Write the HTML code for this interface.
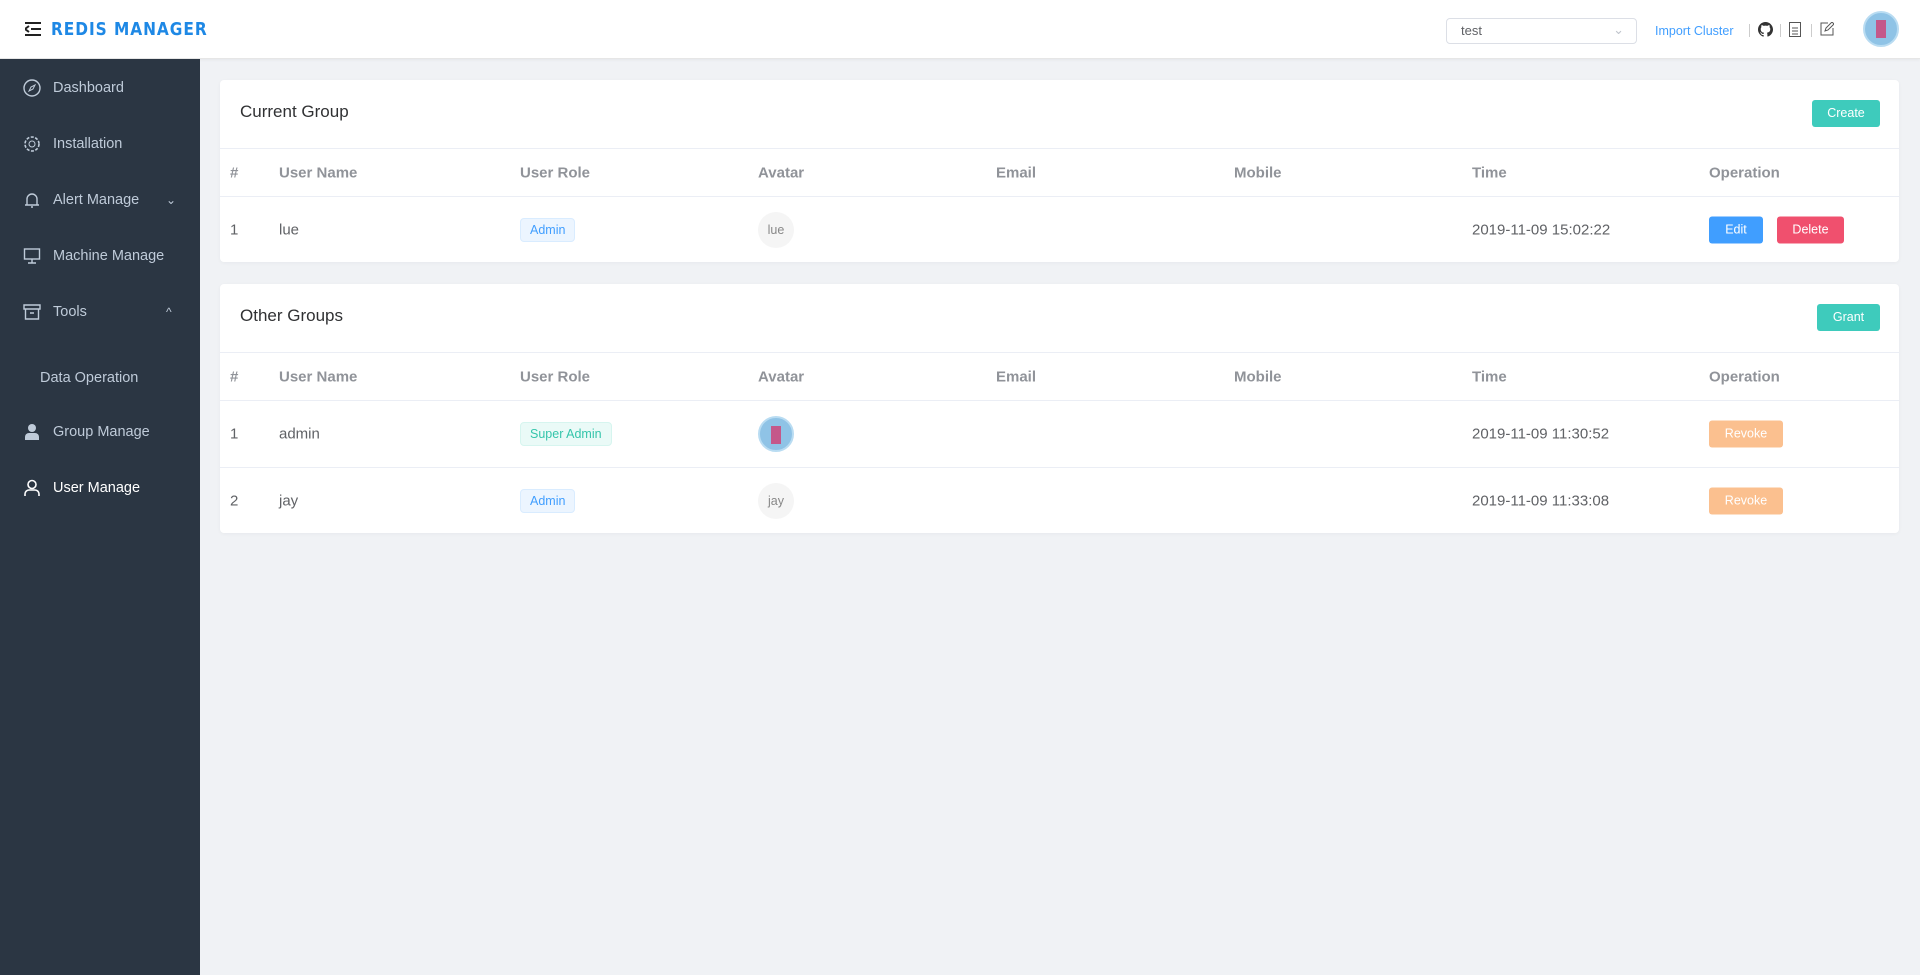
<!DOCTYPE html>
<html><head><meta charset="utf-8"><style>
*{box-sizing:border-box;margin:0;padding:0}
body{width:1920px;height:975px;overflow:hidden;background:#f0f2f5;font-family:"Liberation Sans",sans-serif;position:relative;color:#606266}
.hdr{position:absolute;left:0;top:0;width:1920px;height:59px;background:#fff;border-bottom:1px solid #e6e6e6;box-shadow:0 1px 3px rgba(0,0,0,.05)}
.side{position:absolute;left:0;top:59px;width:200px;height:916px;background:#2b3643}
.mi{position:absolute;left:0;width:200px;height:56px;line-height:56px;color:#bfcbd9;font-size:14.5px;padding-left:53px}
.mi svg{position:absolute;left:23px;top:19px}
.card{position:absolute;left:220px;width:1679px;background:#fff;border-radius:4px;box-shadow:0 1px 4px rgba(0,0,0,.04)}
.ct{position:absolute;left:20px;font-size:17px;color:#303133}
.btn{position:absolute;color:#fff;font-size:12.5px;text-align:center;border-radius:3px}
.row{position:absolute;left:0;width:1679px;border-top:1px solid #ebeef5;font-size:15px}
.row span{position:absolute;top:50%;transform:translateY(-50%);white-space:nowrap}
.th span{font-weight:bold;color:#909399}
.tag{font-size:12.5px;padding:4px 9px;border-radius:4px;border:1px solid}
.tb{color:#409eff;background:#ecf5ff;border-color:#d9ecff}
.tg{color:#35c5ab;background:#eafaf7;border-color:#d6f5ef}
.av{width:36px;height:36px;border-radius:50%;background:#f5f5f5;color:#888;font-size:12.5px;text-align:center;line-height:36px}
</style></head><body>
<div class="hdr">
<svg style="position:absolute;left:25px;top:22px" width="16" height="14" viewBox="0 0 16 14"><path d="M0 1h16M6 7h10M0 13h16M4 4L0 7l4 3" stroke="#222" stroke-width="2" fill="none"/></svg>
<div style="position:absolute;left:51px;top:19px;font-size:18px;font-weight:bold;letter-spacing:1px;color:#1e88e5;font-family:'DejaVu Sans Condensed','Liberation Sans Narrow',sans-serif;transform:scaleX(0.95);transform-origin:left">REDIS MANAGER</div>
<div style="position:absolute;left:1446px;top:18px;width:191px;height:26px;border:1px solid #dcdfe6;border-radius:4px;font-size:13px;color:#606266;line-height:24px;padding-left:14px">test<span style="position:absolute;right:12px;top:-1px;color:#c0c4cc">⌄</span></div>
<div style="position:absolute;left:1655px;top:24px;font-size:12.5px;color:#409eff">Import Cluster</div>
<div style="position:absolute;left:1749px;top:24px;width:1px;height:13px;background:#ccc"></div>
<svg style="position:absolute;left:1758px;top:22px" width="15" height="15" viewBox="0 0 16 16"><path fill="#333" d="M8 0C3.6 0 0 3.6 0 8c0 3.5 2.3 6.5 5.5 7.6.4.1.5-.2.5-.4v-1.4c-2.2.5-2.7-1-2.7-1-.4-.9-.9-1.200-.9-1.200-.7-.5.1-.5.1-.5.8.1 1.2.8 1.2.8.7 1.2 1.900.9 2.300.7.1-.5.3-.9.5-1.1-1.8-.2-3.6-.9-3.6-4 0-.9.3-1.6.8-2.1-.1-.2-.4-1 .1-2.1 0 0 .7-.2 2.2.8.6-.2 1.3-.3 2-.3s1.4.1 2 .3c1.5-1 2.2-.8 2.2-.8.4 1.1.2 1.900.1 2.1.5.6.8 1.3.8 2.1 0 3.1-1.9 3.7-3.6 3.9.3.3.5.8.5 1.5v2.2c0 .2.1.5.6.4C13.7 14.5 16 11.5 16 8c0-4.4-3.6-8-8-8z"/></svg>
<div style="position:absolute;left:1780px;top:24px;width:1px;height:13px;background:#ccc"></div>
<svg style="position:absolute;left:1789px;top:22px" width="12" height="15" viewBox="0 0 12 15"><rect x=".5" y=".5" width="11" height="14" fill="none" stroke="#555"/><path d="M3 6h6M3 9h6M3 12h6" stroke="#555"/></svg>
<div style="position:absolute;left:1811px;top:24px;width:1px;height:13px;background:#ccc"></div>
<svg style="position:absolute;left:1820px;top:22px" width="14" height="14" viewBox="0 0 14 14"><path d="M8 1H1v12h12V6M5 9l1-3 6-6 2 2-6 6z" fill="none" stroke="#555"/></svg>
<div style="position:absolute;left:1863px;top:11px;width:36px;height:36px;border-radius:50%;background:#8fc3e6;border:2px solid #b9dcf2"><div style="margin:7px auto;width:10px;height:18px;background:#c4588a"></div></div>
</div>
<div class="side">
<div class="mi" style="top:1px"><svg width="18" height="18" viewBox="0 0 18 18"><circle cx="9" cy="9" r="8" fill="none" stroke="#bfcbd9" stroke-width="1.4"/><path d="M12 6l-2 4-4 2 2-4z" fill="none" stroke="#bfcbd9"/></svg>Dashboard</div>
<div class="mi" style="top:57px"><svg width="18" height="18" viewBox="0 0 18 18"><circle cx="9" cy="9" r="7" fill="none" stroke="#bfcbd9" stroke-width="1.6" stroke-dasharray="3 1.5"/><circle cx="9" cy="9" r="3" fill="none" stroke="#bfcbd9"/></svg>Installation</div>
<div class="mi" style="top:113px"><svg width="18" height="18" viewBox="0 0 18 18"><path d="M4 14V8a5 5 0 0110 0v6M2 14h14M8 16h2" fill="none" stroke="#bfcbd9" stroke-width="1.4"/></svg>Alert Manage<span style="position:absolute;left:166px;top:0;font-size:12px">⌄</span></div>
<div class="mi" style="top:169px"><svg width="18" height="18" viewBox="0 0 18 18"><rect x="1.5" y="2" width="15" height="10" fill="none" stroke="#bfcbd9" stroke-width="1.4"/><path d="M9 12v4M5 16h8" stroke="#bfcbd9" stroke-width="1.4"/></svg>Machine Manage</div>
<div class="mi" style="top:225px"><svg width="18" height="18" viewBox="0 0 18 18"><path d="M1 2h16v4H1zM2.5 6v10h13V6M7 10h4" fill="none" stroke="#bfcbd9" stroke-width="1.4"/></svg>Tools<span style="position:absolute;left:166px;top:0;font-size:12px">^</span></div>
<div class="mi" style="top:291px;padding-left:40px">Data Operation</div>
<div class="mi" style="top:345px"><svg width="18" height="18" viewBox="0 0 18 18"><circle cx="9" cy="5" r="4" fill="#bfcbd9"/><path d="M2 17v-3a4 4 0 014-4h6a4 4 0 014 4v3z" fill="#bfcbd9"/></svg>Group Manage</div>
<div class="mi" style="top:401px;color:#fff"><svg width="18" height="18" viewBox="0 0 18 18"><circle cx="9" cy="5.5" r="4" fill="none" stroke="#fff" stroke-width="1.6"/><path d="M2 17v-2a4 4 0 014-4h6a4 4 0 014 4v2" fill="none" stroke="#fff" stroke-width="1.6"/></svg>User Manage</div>
</div>

<div class="card" style="top:80px;height:182px">
<div class="ct" style="top:22px">Current Group</div>
<div class="btn" style="left:1592px;top:20px;width:68px;height:27px;line-height:27px;background:#3ecbbc">Create</div>
<div class="row th" style="top:68px;height:48px"><span style="left:10px">#</span><span style="left:59px">User Name</span><span style="left:300px">User Role</span><span style="left:538px">Avatar</span><span style="left:776px">Email</span><span style="left:1014px">Mobile</span><span style="left:1252px">Time</span><span style="left:1489px">Operation</span></div>
<div class="row" style="top:116px;height:66px"><span style="left:10px">1</span><span style="left:59px">lue</span><span style="left:300px" class="tag tb">Admin</span><span style="left:538px" class="av">lue</span><span style="left:1252px">2019-11-09 15:02:22</span><span class="btn" style="left:1489px;width:54px;height:27px;line-height:27px;background:#409eff">Edit</span><span class="btn" style="left:1557px;width:67px;height:27px;line-height:27px;background:#f0506e">Delete</span></div>
</div>

<div class="card" style="top:284px;height:249px">
<div class="ct" style="top:22px">Other Groups</div>
<div class="btn" style="left:1597px;top:20px;width:63px;height:27px;line-height:27px;background:#3ecbbc">Grant</div>
<div class="row th" style="top:68px;height:48px"><span style="left:10px">#</span><span style="left:59px">User Name</span><span style="left:300px">User Role</span><span style="left:538px">Avatar</span><span style="left:776px">Email</span><span style="left:1014px">Mobile</span><span style="left:1252px">Time</span><span style="left:1489px">Operation</span></div>
<div class="row" style="top:116px;height:67px"><span style="left:10px">1</span><span style="left:59px">admin</span><span style="left:300px" class="tag tg">Super Admin</span><span style="left:538px;width:36px;height:36px;border-radius:50%;background:#8fc3e6;border:2px solid #b9dcf2"><span style="left:11px;top:17px;width:10px;height:18px;background:#c4588a"></span></span><span style="left:1252px">2019-11-09 11:30:52</span><span class="btn" style="left:1489px;width:74px;height:27px;line-height:27px;background:#fbc08f">Revoke</span></div>
<div class="row" style="top:183px;height:66px"><span style="left:10px">2</span><span style="left:59px">jay</span><span style="left:300px" class="tag tb">Admin</span><span style="left:538px" class="av">jay</span><span style="left:1252px">2019-11-09 11:33:08</span><span class="btn" style="left:1489px;width:74px;height:27px;line-height:27px;background:#fbc08f">Revoke</span></div>
</div>
</body></html>
